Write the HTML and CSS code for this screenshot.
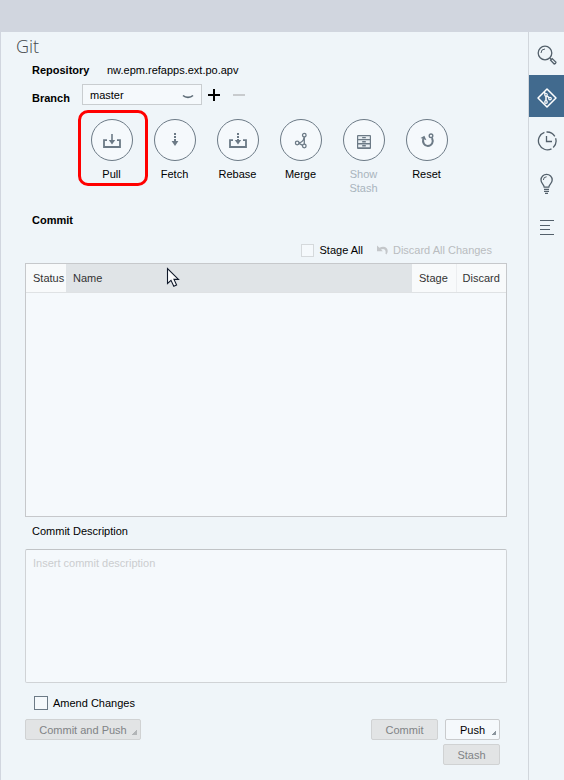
FILE: index.html
```html
<!DOCTYPE html>
<html lang="en">
<head>
<meta charset="utf-8">
<title>Git</title>
<link rel="stylesheet" href="styles.css">
</head>
<body>
<header class="topbar"></header>
<div class="workspace">
  <main class="panel">
    <h1 class="title">Git</h1>
    <div class="field repo">
      <span class="field-name">Repository</span>
      <span>nw.epm.refapps.ext.po.apv</span>
    </div>
    <div class="field branch">
      <label class="branch-name" for="branch">Branch</label>
      <span class="select-wrap">
        <select id="branch"><option>master</option></select>
        <svg class="chevron" width="12" height="6" viewBox="0 0 12 6"><path d="M1 1.5Q3 3.4 6 3.4T11 1.5" fill="none" stroke="#5b6a75" stroke-width="1.6"/></svg>
      </span>
      <button class="icon-button" aria-label="Add branch"><svg width="12" height="12" viewBox="0 0 12 12"><path d="M6 0V12M0 6H12" stroke="#000" stroke-width="2"/></svg></button>
      <button class="icon-button" aria-label="Delete branch" disabled><svg width="12" height="12" viewBox="0 0 12 12"><path d="M0 6H12" stroke="#c8cbce" stroke-width="2"/></svg></button>
    </div>

    <div class="actions">
      <button class="action highlighted">
        <span class="circle"><svg width="20" height="20" viewBox="0 0 20 20"><path d="M5 9.2H2V16H18V9.2H15" fill="none" stroke="#6c7a86" stroke-width="1.8"/><path d="M10 3V10" stroke="#6c7a86" stroke-width="1.6"/><path d="M6.8 9H13.2L10 13.5Z" fill="#6c7a86"/></svg></span>
        <span>Pull</span>
      </button>
      <button class="action">
        <span class="circle"><svg width="20" height="20" viewBox="0 0 20 20"><path d="M10 2V10" stroke="#6c7a86" stroke-width="2" stroke-dasharray="2 1"/><path d="M6.6 10H13.4L10 15Z" fill="#6c7a86"/></svg></span>
        <span>Fetch</span>
      </button>
      <button class="action">
        <span class="circle"><svg width="20" height="20" viewBox="0 0 20 20"><path d="M5 9.2H2V16H18V9.2H15" fill="none" stroke="#6c7a86" stroke-width="1.8"/><path d="M10 2V9" stroke="#6c7a86" stroke-width="2" stroke-dasharray="2 1"/><path d="M6.8 9H13.2L10 13.5Z" fill="#6c7a86"/></svg></span>
        <span>Rebase</span>
      </button>
      <button class="action">
        <span class="circle"><svg width="20" height="20" viewBox="0 0 20 20"><g fill="none" stroke="#6c7a86" stroke-width="1.3"><circle cx="13.3" cy="4.2" r="1.8"/><circle cx="6.2" cy="12" r="1.8"/><circle cx="13.3" cy="15" r="1.8"/><path d="M13.3 6V13.2M13 6.5C12.6 9.5 10.5 11.5 8 11.8M8 12.4L11.6 14.4"/></g></svg></span>
        <span>Merge</span>
      </button>
      <button class="action" disabled>
        <span class="circle"><svg width="20" height="20" viewBox="0 0 20 20"><rect x="3" y="4" width="14" height="14" rx="1" fill="#6c7a86"/><path d="M4.2 5.2H15.8V8H4.2ZM4.2 9.3H15.8V12.1H4.2ZM4.2 13.4H15.8V16.2H4.2Z" fill="#e9eff3"/><path d="M8.2 6.6H11.8M8.2 10.7H11.8M8.2 14.8H11.8" stroke="#6c7a86" stroke-width="1.4"/></svg></span>
        <span>Show Stash</span>
      </button>
      <button class="action">
        <span class="circle"><svg width="20" height="20" viewBox="0 0 20 20"><path d="M6.2 8C5.4 11.5 7.2 15 10.8 15C15 15 16.8 10.8 15 7" fill="none" stroke="#6c7a86" stroke-width="2"/><circle cx="14" cy="4.8" r="1.8" fill="none" stroke="#6c7a86" stroke-width="1.4"/><path d="M3.6 7L7.4 4.8L9.4 9.3Z" fill="#6c7a86"/></svg></span>
        <span>Reset</span>
      </button>
    </div>

    <h2 class="section-title">Commit</h2>
    <div class="stage-tools">
      <label class="check"><input type="checkbox" class="box-small" disabled>Stage All</label>
      <button class="discard-all" disabled><svg width="12" height="10" viewBox="0 0 12 10"><path d="M0 .5V6.2H5.8L4 4.6C6.3 2.8 9.6 4.5 8.4 8.6L9.4 9.4C13 5 8.8-.5 2.4 2.8Z" fill="#c4c7ca"/></svg>Discard All Changes</button>
    </div>

    <div class="changes">
      <table>
        <thead><tr><th class="col-status">Status</th><th class="col-name">Name</th><th class="col-stage">Stage</th><th class="col-discard">Discard</th></tr></thead>
      </table>
      <svg class="pointer" width="14" height="21" viewBox="0 0 14 21"><path d="M1.5 1.5V16.5L5 13.3L7.8 19.2L10.6 18L8 12.4H12.5Z" fill="#fbfcfd" stroke="#111a2b" stroke-width="1.1"/></svg>
    </div>

    <label class="description-label" for="description">Commit Description</label>
    <textarea id="description" placeholder="Insert commit description"></textarea>
    <label class="check amend"><input type="checkbox">Amend Changes</label>
    <div class="buttons">
      <button class="button menu wide" disabled>Commit and Push</button>
      <div class="button-group">
        <button class="button" disabled>Commit</button>
        <button class="button menu push">Push</button>
        <button class="button stash" disabled>Stash</button>
      </div>
    </div>
  </main>

  <nav class="rail">
    <button aria-label="Search"><svg width="22" height="22" viewBox="0 0 22 22"><g fill="none" stroke="#53606b" stroke-width="1.3"><circle cx="9" cy="9" r="6.8"/><path d="M5 9A4 4 0 0 1 9 5" stroke-width="1"/><path d="M13.8 14L15 15.2M14.6 16.2L16.2 14.6L20 18.2Q19.8 19.8 18.2 20Z"/></g></svg></button>
    <button class="active" aria-label="Git"><svg width="22" height="22" viewBox="0 0 22 22"><g fill="none" stroke="#fff" stroke-width="1.5"><path d="M11 2L20 11L11 20L2 11Z" stroke-linejoin="round"/><path d="M8 5L10 7.4M10 9V14M11.2 9L13.4 11"/></g><g fill="#416a8e" stroke="#fff" stroke-width="1.2"><circle cx="10" cy="7.8" r="1.3"/><circle cx="14" cy="11.6" r="1.3"/><circle cx="10" cy="15" r="1.3"/></g></svg></button>
    <button aria-label="History"><svg width="22" height="22" viewBox="0 0 22 22"><g fill="none" stroke="#53606b" stroke-width="1.3"><path d="M8.4 2.3A9 9 0 1 0 15.5 18.8M17.2 17.5A9 9 0 0 0 19.6 8.2M18.8 6.4A9 9 0 0 0 10.5 2"/><path d="M10.5 6V11.5H16"/></g></svg></button>
    <button aria-label="Tips"><svg width="22" height="22" viewBox="0 0 22 22"><g fill="none" stroke="#53606b" stroke-width="1.3"><path d="M8.2 14.2C8 11.5 5 10.5 5 7A5.6 5.6 0 0 1 16.2 7C16.2 10.5 13 11.5 12.8 14.2Z"/><path d="M7.4 7A3.2 3.2 0 0 1 10.6 3.8" stroke-width="1"/><path d="M8 16.4H13M8 18.4H13M9 20.4H12"/></g></svg></button>
    <button aria-label="Outline"><svg width="22" height="22" viewBox="0 0 22 22"><path d="M4 4.5H18M4 9.5H14M4 13.5H14M4 18.5H18" stroke="#53606b" stroke-width="1.2"/></svg></button>
  </nav>
</div>
</body>
</html>
```
FILE: styles.css
```css
* {
  box-sizing: border-box;
}

body {
  margin: 0;
  min-height: 100vh;
  display: flex;
  flex-direction: column;
  background: #eff5f9;
  color: #000;
  font: 11px/14px "Liberation Sans", Arial, sans-serif;
}

button, input, select, textarea {
  margin: 0;
  font: inherit;
  color: inherit;
}

button {
  padding: 0;
  border: 0;
  background: none;
}

svg {
  display: block;
}

.topbar {
  height: 32px;
  background: #d1d6df;
}

.workspace {
  flex: 1;
  display: flex;
}

.panel {
  flex: 1;
  display: flex;
  flex-direction: column;
  padding: 2px 21px 15px 24px;
  border-left: 1px solid #d1d6df;
}

.title {
  margin: 0 0 2px -9px;
  font: 300 18px/24px "Open Sans", sans-serif;
  color: #45494d;
}

.field {
  display: flex;
  align-items: center;
  padding-left: 7px;
}

.repo {
  height: 20px;
}

.field-name {
  width: 75px;
  font-weight: bold;
}

.branch {
  margin-top: 4px;
}

.branch-name {
  width: 50px;
  padding-top: 6px;
  font-weight: bold;
}

.select-wrap {
  position: relative;
  margin-right: 6px;
}

.select-wrap select {
  display: block;
  width: 120px;
  height: 21px;
  padding: 0 7px;
  appearance: none;
  border: 1px solid #c9cdd0;
  border-radius: 0;
  background: #f5f9fc;
}

.chevron {
  position: absolute;
  right: 8px;
  top: 10px;
  pointer-events: none;
}

.icon-button {
  width: 12px;
  margin-right: 13px;
}

.actions {
  display: flex;
  margin: 14px 0 0 55px;
}

.action {
  position: relative;
  width: 63px;
  display: flex;
  flex-direction: column;
  align-items: center;
  align-self: flex-start;
  gap: 6px;
}

.action > span:last-child {
  max-width: 34px;
  white-space: nowrap;
  display: flex;
  justify-content: center;
}

.action:disabled > span:last-child {
  display: block;
  white-space: normal;
  color: #a9b4bd;
}

.circle {
  width: 42px;
  height: 42px;
  display: grid;
  place-items: center;
  padding-top: 2px;
  border: 1px solid #6c7a86;
  border-radius: 50%;
  background: #f5f9fc;
}

.highlighted::after {
  content: "";
  position: absolute;
  inset: -9px -5px -5px -2px;
  border: 3px solid #f00;
  border-radius: 10px;
}

.section-title {
  margin: 18px 0 0 7px;
  font-size: 11px;
  line-height: 14px;
}

.stage-tools {
  display: flex;
  justify-content: flex-end;
  gap: 14px;
  margin: 16px 15px 6px 0;
}

.check {
  display: flex;
  align-items: center;
  gap: 5px;
}

.check input {
  width: 14px;
  height: 14px;
  appearance: none;
  border: 1px solid #6c7a86;
  background: #f5f9fc;
}

.check .box-small {
  width: 13px;
  height: 13px;
  margin-right: 1px;
  border-color: #d5d9dc;
}

.discard-all {
  display: flex;
  align-items: center;
  gap: 4px;
  color: #b9bcbf;
}

.changes {
  position: relative;
  flex: 1;
  min-height: 120px;
  border: 1px solid #c6c8cb;
  background: #f5f9fc;
}

.changes table {
  width: 100%;
  table-layout: fixed;
  border-collapse: collapse;
}

.changes th {
  height: 28px;
  padding: 1px 0 0 7px;
  border-bottom: 1px solid #dfe2e4;
  background: #f8fafb;
  color: #333;
  font-weight: normal;
  text-align: left;
}

.changes .col-status {
  width: 40px;
}

.changes .col-name {
  background: #e0e4e7;
}

.changes .col-stage {
  width: 44px;
}

.changes .col-discard {
  width: 50px;
  padding-left: 6px;
  border-left: 1px solid #eceef0;
}

.pointer {
  position: absolute;
  left: 140px;
  top: 3px;
}

.description-label {
  margin: 7px 0 11px 7px;
}

textarea {
  height: 134px;
  padding: 6px 7px;
  resize: none;
  border: 1px solid #d0d3d6;
  border-top-color: #c0c3c6;
  border-radius: 2px;
  background: #f5f9fc;
}

textarea::placeholder {
  color: #cbcdcf;
}

.amend {
  align-self: flex-start;
  margin: 13px 0 9px 9px;
}

.buttons {
  display: flex;
  justify-content: space-between;
  align-items: flex-start;
  padding-right: 7px;
}

.button-group {
  display: grid;
  grid-template-columns: 67px 57px;
  gap: 4px 5px;
}

.button {
  position: relative;
  height: 21px;
  border: 1px solid #c9cbcd;
  border-radius: 2px;
  background: #f5f9fc;
}

.button:disabled {
  border-color: #d0d2d3;
  background: #e2e4e5;
  color: #808386;
}

.wide {
  width: 116px;
}

.push {
  margin-left: 2px;
}

.stash {
  grid-column: 2;
}

.menu::after {
  content: "";
  position: absolute;
  right: 3px;
  bottom: 4px;
  width: 5px;
  height: 5px;
  background: linear-gradient(135deg, transparent 50%, #8b959d 50%);
}

.menu:disabled::after {
  background: linear-gradient(135deg, transparent 50%, #b2b5b7 50%);
}

.rail {
  width: 36px;
  display: flex;
  flex-direction: column;
  gap: 1px;
  border-left: 1px solid #d1d6dc;
}

.rail button {
  height: 42px;
  display: grid;
  place-items: center;
  padding-top: 4px;
}

.rail .active {
  background: #416a8e;
}
```
